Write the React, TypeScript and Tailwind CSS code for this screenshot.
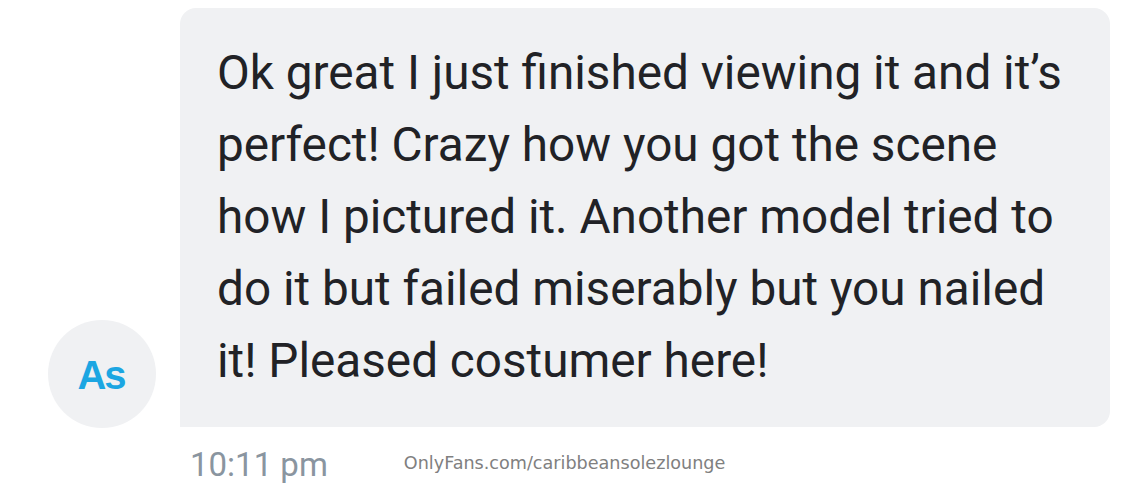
export default function App() {
  return (
    <div className="w-[1125px] h-[489px] bg-white relative overflow-hidden font-['Roboto',sans-serif]">
      <div className="flex items-end pt-2 pl-12 pr-[15px]">
        <div className="w-[108px] h-[108px] shrink-0 mb-[-1px] rounded-full bg-[#f0f1f3] flex items-center justify-center">
          <span className="text-[#1ca6e2] text-[40px] leading-none font-bold font-['Liberation_Sans',sans-serif] tracking-[-2px] pr-[2px] pt-[2px]">As</span>
        </div>
        <div className="ml-6 flex-1 bg-[#f0f1f3] rounded-[16px] rounded-bl-none pl-[37px] pr-[36px] pt-[29px] pb-[30px]">
          <p className="text-[#212226] text-[47.7px] leading-[72px]">
            Ok great I just finished viewing it and it’s perfect! Crazy how you got the scene how I pictured it. Another model tried to do it but failed miserably but you nailed it! Pleased costumer here!
          </p>
        </div>
      </div>
      <div className="flex items-center pl-[190px] mt-[21px]">
        <span className="text-[#8a95a0] text-[33px] leading-none">10:11 pm</span>
        <span className="ml-[76px] text-[#808080] text-[17.6px] leading-none font-['DejaVu_Sans',sans-serif] mt-[-2px]">OnlyFans.com/caribbeansolezlounge</span>
      </div>
    </div>
  );
}
